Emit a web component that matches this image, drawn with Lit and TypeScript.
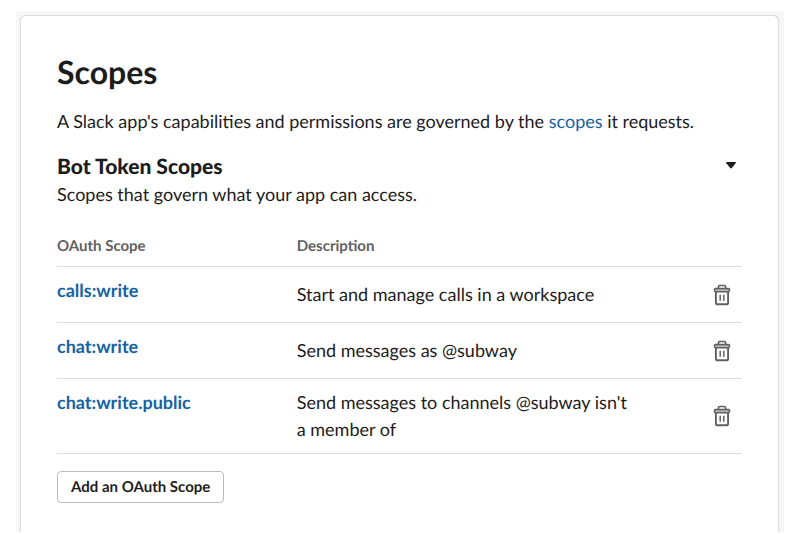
import { LitElement, html, css, svg } from "lit";
import { customElement, property, state } from "lit/decorators.js";

interface Scope {
  name: string;
  description: string;
}

@customElement("trash-icon")
class TrashIcon extends LitElement {
  static styles = css`
    :host {
      display: block;
      width: 18px;
      height: 22px;
    }
    .icon {
      display: block;
      fill: none;
      stroke: #616061;
    }
    .lid {
      fill: #d4d4d4;
    }
  `;

  render() {
    return html`<svg class="icon" width="18" height="22" viewBox="0 0 18 22" aria-hidden="true">
      ${svg`
        <path d="M5.4 4.4V2.9Q5.4 1.5 6.8 1.5H11.2Q12.6 1.5 12.6 2.9V4.4" stroke-width="1.7" />
        <rect class="lid" x="1.5" y="4.6" width="15" height="3" rx="1" stroke-width="1.6" />
        <path d="M2.9 7.6V18.7Q2.9 20.3 4.5 20.3H13.5Q15.1 20.3 15.1 18.7V7.6" stroke-width="1.9" />
        <path d="M7.2 10.8V16.8M10.8 10.8V16.8" stroke-width="1.5" />
      `}
    </svg>`;
  }
}

@customElement("scope-table")
class ScopeTable extends LitElement {
  @property({ attribute: false }) scopes: Scope[] = [];

  static styles = css`
    :host {
      display: block;
    }
    .table {
      width: 100%;
      border-collapse: collapse;
      table-layout: fixed;
    }
    .name-col {
      width: 35%;
    }
    .action-col {
      width: 108px;
    }
    .head {
      padding: 10px 0;
      border-bottom: 1px solid #dddddd;
      color: #616061;
      font-size: 15px;
      line-height: 20px;
      font-weight: 700;
      text-align: left;
    }
    .cell {
      height: 35px;
      padding: 10px 0;
      border-bottom: 1px solid #dddddd;
      vertical-align: middle;
    }
    .name {
      vertical-align: top;
    }
    .link {
      color: #1264a3;
      font-weight: 700;
      text-decoration: none;
    }
    .delete {
      display: block;
      margin: 0 11px 0 auto;
      padding: 0;
      border: 0;
      background: none;
      cursor: pointer;
    }
  `;

  private remove(scope: Scope) {
    this.dispatchEvent(new CustomEvent("remove-scope", { detail: scope }));
  }

  render() {
    return html`<table class="table">
      <colgroup>
        <col class="name-col" />
        <col />
        <col class="action-col" />
      </colgroup>
      <thead>
        <tr>
          <th class="head" scope="col">OAuth Scope</th>
          <th class="head" scope="col">Description</th>
          <td class="head"></td>
        </tr>
      </thead>
      <tbody>
        ${this.scopes.map(
          (s) => html`<tr>
            <td class="cell name"><a class="link" href="#${s.name}">${s.name}</a></td>
            <td class="cell">${s.description}</td>
            <td class="cell">
              <button class="delete" type="button" aria-label="Delete ${s.name}" @click=${() => this.remove(s)}>
                <trash-icon></trash-icon>
              </button>
            </td>
          </tr>`
        )}
      </tbody>
    </table>`;
  }
}

@customElement("app-root")
class AppRoot extends LitElement {
  @state() private open = true;
  @state() private scopes: Scope[] = [
    { name: "calls:write", description: "Start and manage calls in a workspace" },
    { name: "chat:write", description: "Send messages as @subway" },
    { name: "chat:write.public", description: "Send messages to channels @subway isn't a member of" },
  ];

  static styles = css`
    :host {
      display: block;
      padding: 11px 15px 0 16px;
      background: #ffffff;
      color: #1d1c1d;
      font: 400 18px/27px Lato, "Open Sans", sans-serif;
      text-rendering: geometricPrecision;
    }
    .frame {
      padding: 4px 5px 0 4px;
      background: #f7f7f7;
    }
    .card {
      padding: 36px 36px 29px;
      border: 1px solid #dddddd;
      border-bottom: 0;
      border-radius: 6px 6px 0 0;
      box-shadow: 0 0 1px #d0d0d0;
      background: #ffffff;
    }
    .title {
      margin: 0;
      font-size: 32px;
      line-height: 40px;
      font-weight: 700;
    }
    .intro {
      margin: 16px 0 18px;
    }
    .link {
      color: #1264a3;
      text-decoration: none;
    }
    .section-head {
      display: flex;
      align-items: center;
      justify-content: space-between;
    }
    .section-title {
      margin: 0;
      font-size: 21px;
      line-height: 28px;
      font-weight: 900;
    }
    .toggle {
      padding: 4px 6px 8px;
      border: 0;
      background: none;
      cursor: pointer;
    }
    .caret {
      display: block;
      fill: #1d1c1d;
    }
    .section-text {
      margin: 0 0 18px;
    }
    .add {
      display: block;
      margin-top: 17px;
      padding: 0 13px;
      border: 1px solid #bbbbbb;
      border-radius: 4px;
      background: #ffffff;
      color: #1d1c1d;
      font: 700 15px/30px Lato, "Open Sans", sans-serif;
      text-rendering: inherit;
      cursor: pointer;
    }
  `;

  private onRemove(e: CustomEvent<Scope>) {
    this.scopes = this.scopes.filter((s) => s !== e.detail);
  }

  render() {
    return html`<main class="frame">
      <section class="card">
        <h1 class="title">Scopes</h1>
        <p class="intro">
          A Slack app's capabilities and permissions are governed by the
          <a class="link" href="#scopes">scopes</a> it requests.
        </p>
        <div class="section-head">
          <h2 class="section-title">Bot Token Scopes</h2>
          <button
            class="toggle"
            type="button"
            aria-label="Toggle Bot Token Scopes"
            aria-expanded=${this.open ? "true" : "false"}
            @click=${() => (this.open = !this.open)}
          >
            <svg class="caret" width="10" height="7" viewBox="0 0 10 7" aria-hidden="true">
              <path d="M0.8 0H9.2Q10.4 0.2 9.6 1.3L5.8 6.1Q5 7 4.2 6.1L0.4 1.3Q-0.4 0.2 0.8 0Z" />
            </svg>
          </button>
        </div>
        <p class="section-text">Scopes that govern what your app can access.</p>
        ${this.open
          ? html`<scope-table .scopes=${this.scopes} @remove-scope=${this.onRemove}></scope-table>
              <button class="add" type="button">Add an OAuth Scope</button>`
          : ""}
      </section>
    </main>`;
  }
}
